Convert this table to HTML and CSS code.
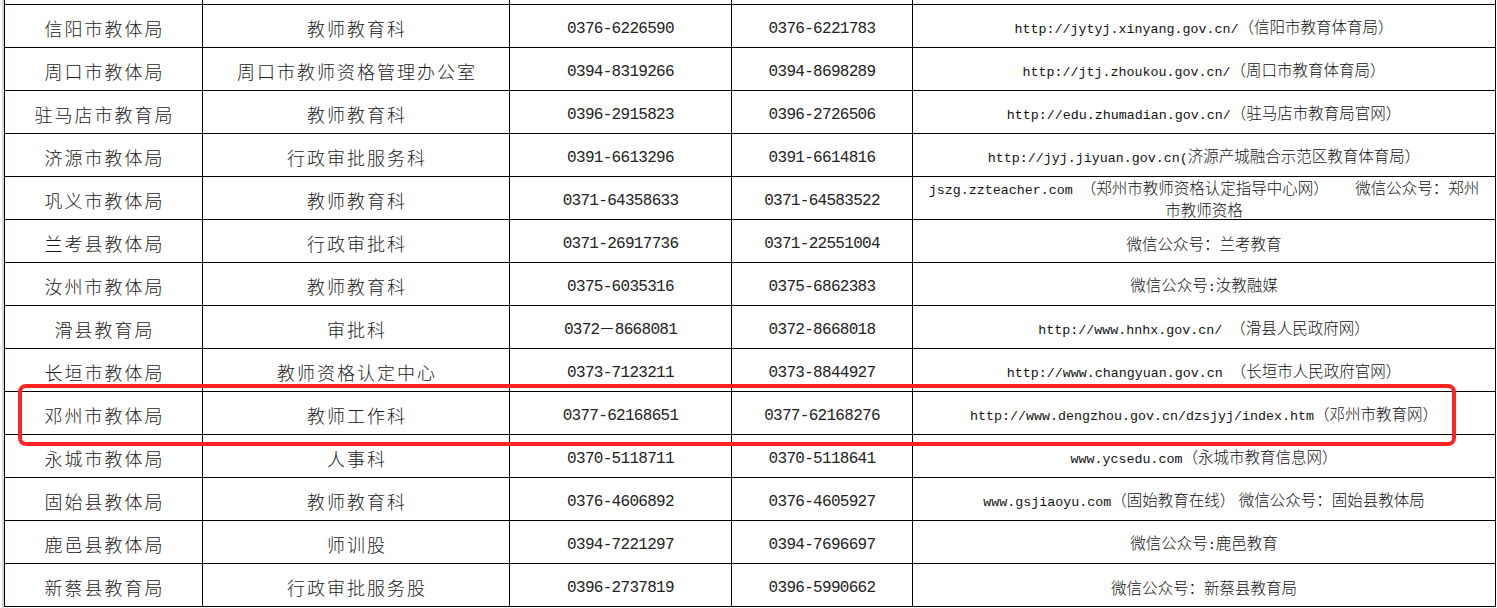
FILE: index.html
```html
<!DOCTYPE html>
<html lang="zh-CN">
<head>
<meta charset="utf-8">
<title>教师资格认定机构联系方式</title>
<link rel="stylesheet" href="styles.css">
</head>
<body>
<div class="sheet">
  <div class="gutter"></div>
  <div class="grid-wrap">
    <table class="grid">
      <colgroup>
        <col class="c1"><col class="c2"><col class="c3"><col class="c4"><col class="c5">
      </colgroup>
      <tbody>
        <tr class="cut"><td></td><td></td><td></td><td></td><td></td></tr>
        <tr><td class="cn">信阳市教体局</td><td class="cn">教师教育科</td><td class="num">0376-6226590</td><td class="num">0376-6221783</td><td class="web"><span class="u">http://jytyj.xinyang.gov.cn/</span>（信阳市教育体育局）</td></tr>
        <tr><td class="cn">周口市教体局</td><td class="cn">周口市教师资格管理办公室</td><td class="num">0394-8319266</td><td class="num">0394-8698289</td><td class="web"><span class="u">http://jtj.zhoukou.gov.cn/</span>（周口市教育体育局）</td></tr>
        <tr><td class="cn">驻马店市教育局</td><td class="cn">教师教育科</td><td class="num">0396-2915823</td><td class="num">0396-2726506</td><td class="web"><span class="u">http://edu.zhumadian.gov.cn/</span>（驻马店市教育局官网）</td></tr>
        <tr><td class="cn">济源市教体局</td><td class="cn">行政审批服务科</td><td class="num">0391-6613296</td><td class="num">0391-6614816</td><td class="web"><span class="u">http://jyj.jiyuan.gov.cn(</span>济源产城融合示范区教育体育局）</td></tr>
        <tr><td class="cn">巩义市教体局</td><td class="cn">教师教育科</td><td class="num">0371-64358633</td><td class="num">0371-64583522</td><td class="web two"><span class="u">jszg.zzteacher.com </span>（郑州市教师资格认定指导中心网）　　 微信公众号：郑州<br>市教师资格</td></tr>
        <tr><td class="cn">兰考县教体局</td><td class="cn">行政审批科</td><td class="num">0371-26917736</td><td class="num">0371-22551004</td><td class="web">微信公众号：兰考教育</td></tr>
        <tr><td class="cn">汝州市教体局</td><td class="cn">教师教育科</td><td class="num">0375-6035316</td><td class="num">0375-6862383</td><td class="web">微信公众号<span class="u">:</span>汝教融媒</td></tr>
        <tr><td class="cn">滑县教育局</td><td class="cn">审批科</td><td class="num">0372－8668081</td><td class="num">0372-8668018</td><td class="web"><span class="u">http://www.hnhx.gov.cn/ </span>（滑县人民政府网）</td></tr>
        <tr><td class="cn">长垣市教体局</td><td class="cn">教师资格认定中心</td><td class="num">0373-7123211</td><td class="num">0373-8844927</td><td class="web"><span class="u">http://www.changyuan.gov.cn </span>（长垣市人民政府官网）</td></tr>
        <tr><td class="cn">邓州市教体局</td><td class="cn">教师工作科</td><td class="num">0377-62168651</td><td class="num">0377-62168276</td><td class="web"><span class="u">http://www.dengzhou.gov.cn/dzsjyj/index.htm</span>（邓州市教育网）</td></tr>
        <tr><td class="cn">永城市教体局</td><td class="cn">人事科</td><td class="num">0370-5118711</td><td class="num">0370-5118641</td><td class="web"><span class="u">www.ycsedu.com</span>（永城市教育信息网）</td></tr>
        <tr><td class="cn">固始县教体局</td><td class="cn">教师教育科</td><td class="num">0376-4606892</td><td class="num">0376-4605927</td><td class="web"><span class="u">www.gsjiaoyu.com</span>（固始教育在线） 微信公众号：固始县教体局</td></tr>
        <tr><td class="cn">鹿邑县教体局</td><td class="cn">师训股</td><td class="num">0394-7221297</td><td class="num">0394-7696697</td><td class="web">微信公众号<span class="u">:</span>鹿邑教育</td></tr>
        <tr><td class="cn">新蔡县教育局</td><td class="cn">行政审批服务股</td><td class="num">0396-2737819</td><td class="num">0396-5990662</td><td class="web">微信公众号：新蔡县教育局</td></tr>
      </tbody>
    </table>
    <div class="mark"></div>
  </div>
</div>
</body>
</html>
```

FILE: styles.css
```css
html, body {
  margin: 0;
  padding: 0;
  background: #fff;
}

body {
  font-family: "Noto Sans CJK SC", "Liberation Sans", sans-serif;
  color: #111;
  overflow: hidden;
}

.sheet {
  display: flex;
  padding-left: 2px;
  height: 608px;
}

.gutter {
  width: 2px;
  flex: none;
  background: #d3d6e3;
}

.grid-wrap {
  position: relative;
  flex: none;
}

.grid {
  border-collapse: collapse;
  table-layout: fixed;
  width: 1491px;
}

.c1 { width: 198px; }
.c2 { width: 307px; }
.c3 { width: 222px; }
.c4 { width: 181px; }
.c5 { width: 583px; }

.grid td {
  border: 1px solid #000;
  height: 39px;
  padding: 3px 2px 0;
  line-height: 20px;
  text-align: center;
  vertical-align: middle;
  white-space: nowrap;
  overflow: hidden;
}

.grid .cut td {
  border-top: none;
  height: 4px;
  padding: 0;
  font-size: 0;
  line-height: 0;
}

.cn {
  font-size: 18px;
  font-weight: 300;
  letter-spacing: 2px;
  text-indent: 2px;
  color: #1a1a1a;
}

.grid td.num {
  font-family: "Liberation Mono", monospace;
  font-size: 16px;
  letter-spacing: -0.7px;
  padding-top: 5px;
  height: 37px;
  color: #222;
}

.web {
  font-size: 15.5px;
  font-weight: 300;
  color: #111;
}

.grid td.web.two {
  line-height: 18px;
  padding: 0 1px;
  height: 42px;
  white-space: normal;
}

.u {
  font-family: "Liberation Mono", monospace;
  font-size: 13.33px;
  letter-spacing: 0;
  font-weight: 400;
}

.mark {
  position: absolute;
  left: 14px;
  top: 384px;
  width: 1430px;
  height: 54px;
  border: 4px solid #ff2424;
  border-radius: 8px;
  pointer-events: none;
}
```
